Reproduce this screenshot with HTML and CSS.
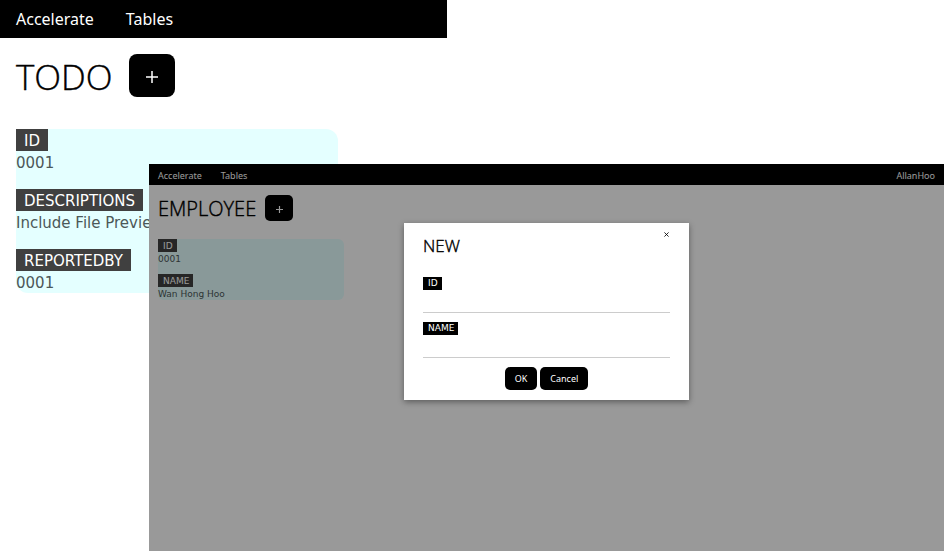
FILE: index.html
```html
<!DOCTYPE html>
<html lang="en">
<head>
<meta charset="utf-8">
<title>Accelerate</title>
<link rel="stylesheet" href="styles.css">
</head>
<body>
<main class="stage">
  <section class="page">
    <nav class="bar">
      <a href="#">Accelerate</a>
      <a href="#">Tables</a>
    </nav>
    <header class="head">
      <h1>TODO</h1>
      <button class="btn add" type="button" aria-label="Add"><svg viewBox="0 0 12 12"><path d="M6 0v12M0 6h12"/></svg></button>
    </header>
    <dl class="card">
      <div><dt>ID</dt><dd>0001</dd></div>
      <div><dt>DESCRIPTIONS</dt><dd>Include File Preview</dd></div>
      <div><dt>REPORTEDBY</dt><dd>0001</dd></div>
    </dl>
  </section>

  <section class="page window">
    <nav class="bar">
      <a href="#">Accelerate</a>
      <a href="#">Tables</a>
      <a href="#" class="user">AllanHoo</a>
    </nav>
    <header class="head">
      <h1>EMPLOYEE</h1>
      <button class="btn add" type="button" aria-label="Add"><svg viewBox="0 0 12 12"><path d="M6 0v12M0 6h12"/></svg></button>
    </header>
    <dl class="card">
      <div><dt>ID</dt><dd>0001</dd></div>
      <div><dt>NAME</dt><dd>Wan Hong Hoo</dd></div>
    </dl>
    <div class="overlay">
      <form class="dialog" role="dialog" aria-labelledby="dialog-title">
        <button class="close" type="button" aria-label="Close"><svg viewBox="0 0 6 6"><path d="M.5.5l5 5M5.5.5l-5 5"/></svg></button>
        <h2 id="dialog-title">NEW</h2>
        <div class="field"><label for="id">ID</label><input id="id" type="text"></div>
        <div class="field"><label for="name">NAME</label><input id="name" type="text"></div>
        <div class="actions">
          <button class="btn" type="button">OK</button>
          <button class="btn" type="button">Cancel</button>
        </div>
      </form>
    </div>
  </section>
</main>
</body>
</html>
```
FILE: styles.css
```css
* { box-sizing: border-box; }
body {
  margin: 0;
  background: #fff;
  color: #000;
  font-family: Verdana, "DejaVu Sans", sans-serif;
}
h1, h2, dl, dd { margin: 0; }
h1, h2 {
  font-family: "Segoe UI", "Open Sans", sans-serif;
  font-weight: 300;
  -webkit-text-stroke: 0.4px currentColor;
}
button, input { font: inherit; }
svg { display: block; fill: none; stroke: currentColor; }

.stage { position: relative; min-height: 100vh; overflow: hidden; }
.page { font-size: 15px; line-height: 22px; }

.bar {
  display: flex;
  width: 447px;
  max-width: 100%;
  padding: 8px 16px;
  gap: 32px;
  background: #000;
  font-family: "Noto Sans", sans-serif;
  font-size: 16px;
}
.bar a { color: #fff; text-decoration: none; }
.bar .user { margin-left: auto; }

.head { display: flex; align-items: center; gap: 16px; padding: 16px; }
.head h1 { padding-top: 2px; font-size: 35px; line-height: 41px; }

.btn {
  border: 0;
  border-radius: 8px;
  background: #000;
  color: #fff;
}
.add { display: grid; place-items: center; width: 46px; height: 43px; padding: 2px 0 0; }
.add svg { width: 12px; stroke-width: 1.5; }

.card {
  display: grid;
  gap: 16px;
  width: 322px;
  margin: 16px 16px 0;
  border-radius: 12px;
  background: #e4ffff;
}
.card dt, .card dd { padding-top: 2px; line-height: 20px; }
.card dt {
  width: fit-content;
  padding-inline: 8px;
  background: #404040;
  color: #fff;
}
.card dd { color: #4c5858; white-space: nowrap; }

.window {
  position: absolute;
  inset: 164px 0 0 149px;
  background: #fff;
  font-size: 9px;
  line-height: 13px;
}
.window .bar { width: auto; padding: 5px 9px 3px; gap: 19px; font-size: 9px; }
.window .head { padding: 10px 9px; gap: 9px; }
.window .head h1 { padding-top: 1px; font-size: 20px; line-height: 25px; }
.window .add { width: 28px; height: 26px; }
.window .add svg { width: 7px; stroke-width: 2; }
.window .btn { border-radius: 5px; }
.window .card { width: 186px; margin: 8px 9px 0; gap: 9px; border-radius: 6px; }
.window dt, .window dd { padding-top: 1px; line-height: 12px; }
.window dt { padding-inline: 5px 4px; }

.overlay {
  position: absolute;
  inset: 0;
  padding-top: 59px;
  background: rgba(0, 0, 0, 0.4);
}
.dialog {
  position: relative;
  width: 285px;
  margin: 0 auto;
  padding: 10px 19px;
  background: #fff;
  box-shadow: 0 2px 6px rgba(0, 0, 0, 0.4);
}
.dialog h2 { margin-bottom: 18px; font-size: 17px; line-height: 26px; }
.close {
  position: absolute;
  top: 5px;
  right: 16px;
  padding: 4px;
  border: 0;
  background: none;
}
.close svg { width: 5px; }
.field { display: grid; margin-bottom: 9px; }
.field label {
  width: fit-content;
  padding: 0 4px 0 5px;
  background: #000;
  color: #fff;
}
.field input {
  height: 23px;
  padding: 4px;
  border: 0;
  border-bottom: 1px solid #ccc;
  background: none;
}
.actions { display: flex; justify-content: center; gap: 3px; }
.actions .btn {
  padding: 5px 10px;
  font-family: "Noto Sans", sans-serif;
}
```
